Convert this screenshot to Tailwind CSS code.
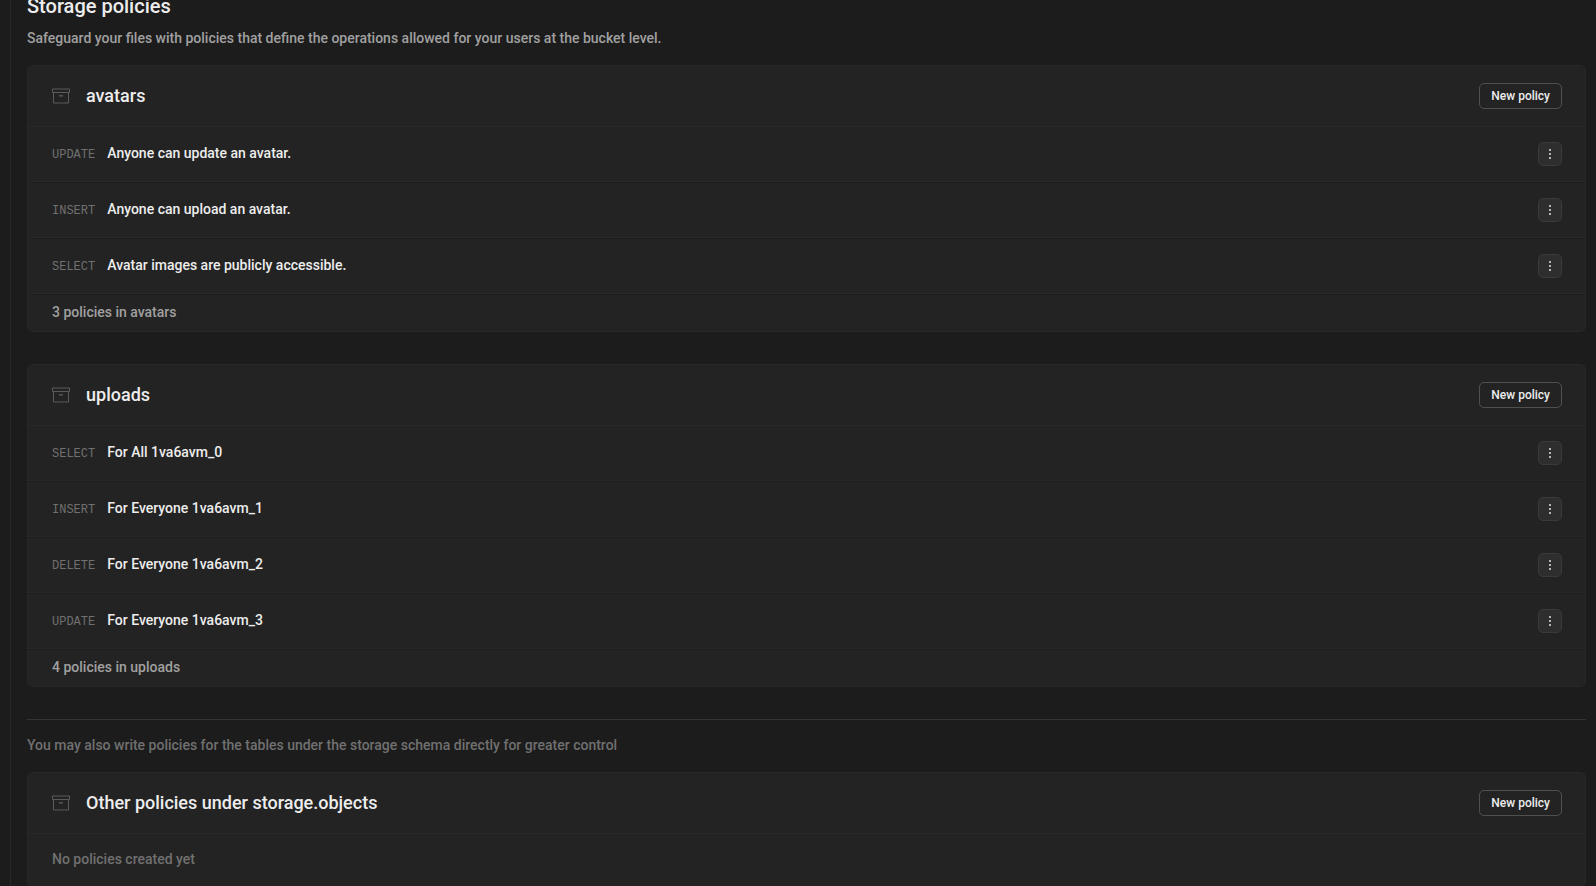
<!DOCTYPE html>
<html lang="en">
  <head>
    <meta charset="UTF-8" />
    <meta name="viewport" content="width=device-width, initial-scale=1.0" />
    <script src="https://cdn.jsdelivr.net/npm/@tailwindcss/browser@4"></script>
    <title>Storage policies</title>
  </head>
  <body class="bg-[#1c1c1c] font-['Roboto',sans-serif] text-sm font-medium text-[#ededed]">
    <!-- Icons -->
    <svg class="hidden" aria-hidden="true">
      <symbol id="archive" viewBox="0 0 18 16" fill="none" stroke="currentColor">
        <path d="M.5 1h17v3.5H.5zM1.5 4.5V15h15V4.5" />
        <path d="M7 7.8h4" stroke-width="1.4" />
      </symbol>
      <symbol id="dots" viewBox="0 0 2 10" fill="currentColor">
        <path d="M0 0h2v2H0zM0 4h2v2H0zM0 8h2v2H0z" />
      </symbol>
    </svg>

    <div class="flex h-screen overflow-hidden">
      <!-- Edge of the side menu -->
      <aside class="w-[11px] shrink-0 border-r border-[#282828]"></aside>

      <main class="-mt-2 min-w-0 grow pl-4 pr-[10px]">
        <h1 class="text-xl/7">Storage policies</h1>
        <p class="mt-2 text-[#a0a0a0]">
          Safeguard your files with policies that define the operations allowed for your users at the bucket level.
        </p>

        <!-- avatars -->
        <section class="mt-[17px] rounded-md border border-[#282828] bg-[#232323]">
          <header class="flex h-[61px] items-center justify-between border-b border-[#282828] pr-[23px] pl-6">
            <div class="flex items-center gap-4">
              <svg class="h-4 w-[18px] text-[#5a5a5a]"><use href="#archive" /></svg>
              <h2 class="text-lg/7">avatars</h2>
            </div>
            <button class="h-[26px] rounded-[5px] border border-[#505050] px-[11px] text-xs">New policy</button>
          </header>
          <ul>
            <li class="flex items-center justify-between border-b border-[#282828] py-[15px] pr-[23px] pl-6">
              <div class="flex items-baseline gap-3 pb-0.5">
                <span class="font-['Liberation_Mono',monospace] text-xs font-normal text-[#707070]">UPDATE</span>
                <span>Anyone can update an avatar.</span>
              </div>
              <button aria-label="Policy options" class="flex size-6 items-center justify-center rounded-[5px] border border-[#3a3a3a] bg-[#2e2e2e] text-[#b4b4b4]">
                <svg class="h-[10px] w-0.5"><use href="#dots" /></svg>
              </button>
            </li>
            <li class="flex items-center justify-between border-t border-b border-t-[#1c1c1c] border-b-[#282828] py-[15px] pr-[23px] pl-6">
              <div class="flex items-baseline gap-3 pb-0.5">
                <span class="font-['Liberation_Mono',monospace] text-xs font-normal text-[#707070]">INSERT</span>
                <span>Anyone can upload an avatar.</span>
              </div>
              <button aria-label="Policy options" class="flex size-6 items-center justify-center rounded-[5px] border border-[#3a3a3a] bg-[#2e2e2e] text-[#b4b4b4]">
                <svg class="h-[10px] w-0.5"><use href="#dots" /></svg>
              </button>
            </li>
            <li class="flex items-center justify-between border-t border-b border-t-[#1c1c1c] border-b-[#282828] py-[15px] pr-[23px] pl-6">
              <div class="flex items-baseline gap-3 pb-0.5">
                <span class="font-['Liberation_Mono',monospace] text-xs font-normal text-[#707070]">SELECT</span>
                <span>Avatar images are publicly accessible.</span>
              </div>
              <button aria-label="Policy options" class="flex size-6 items-center justify-center rounded-[5px] border border-[#3a3a3a] bg-[#2e2e2e] text-[#b4b4b4]">
                <svg class="h-[10px] w-0.5"><use href="#dots" /></svg>
              </button>
            </li>
          </ul>
          <footer class="border-t border-[#1c1c1c] px-6 pt-[7px] pb-[9px] text-[#a0a0a0]">3 policies in avatars</footer>
        </section>

        <!-- uploads -->
        <section class="mt-8 rounded-md border border-[#282828] bg-[#232323]">
          <header class="flex h-[61px] items-center justify-between border-b border-[#282828] pr-[23px] pl-6">
            <div class="flex items-center gap-4">
              <svg class="h-4 w-[18px] text-[#5a5a5a]"><use href="#archive" /></svg>
              <h2 class="text-lg/7">uploads</h2>
            </div>
            <button class="h-[26px] rounded-[5px] border border-[#505050] px-[11px] text-xs">New policy</button>
          </header>
          <ul>
            <li class="flex items-center justify-between border-b border-[#282828] py-[15px] pr-[23px] pl-6">
              <div class="flex items-baseline gap-3 pb-0.5">
                <span class="font-['Liberation_Mono',monospace] text-xs font-normal text-[#707070]">SELECT</span>
                <span>For All 1va6avm_0</span>
              </div>
              <button aria-label="Policy options" class="flex size-6 items-center justify-center rounded-[5px] border border-[#3a3a3a] bg-[#2e2e2e] text-[#b4b4b4]">
                <svg class="h-[10px] w-0.5"><use href="#dots" /></svg>
              </button>
            </li>
            <li class="flex items-center justify-between border-t border-b border-t-[#1c1c1c] border-b-[#282828] py-[15px] pr-[23px] pl-6">
              <div class="flex items-baseline gap-3 pb-0.5">
                <span class="font-['Liberation_Mono',monospace] text-xs font-normal text-[#707070]">INSERT</span>
                <span>For Everyone 1va6avm_1</span>
              </div>
              <button aria-label="Policy options" class="flex size-6 items-center justify-center rounded-[5px] border border-[#3a3a3a] bg-[#2e2e2e] text-[#b4b4b4]">
                <svg class="h-[10px] w-0.5"><use href="#dots" /></svg>
              </button>
            </li>
            <li class="flex items-center justify-between border-t border-b border-t-[#1c1c1c] border-b-[#282828] py-[15px] pr-[23px] pl-6">
              <div class="flex items-baseline gap-3 pb-0.5">
                <span class="font-['Liberation_Mono',monospace] text-xs font-normal text-[#707070]">DELETE</span>
                <span>For Everyone 1va6avm_2</span>
              </div>
              <button aria-label="Policy options" class="flex size-6 items-center justify-center rounded-[5px] border border-[#3a3a3a] bg-[#2e2e2e] text-[#b4b4b4]">
                <svg class="h-[10px] w-0.5"><use href="#dots" /></svg>
              </button>
            </li>
            <li class="flex items-center justify-between border-t border-b border-t-[#1c1c1c] border-b-[#282828] py-[15px] pr-[23px] pl-6">
              <div class="flex items-baseline gap-3 pb-0.5">
                <span class="font-['Liberation_Mono',monospace] text-xs font-normal text-[#707070]">UPDATE</span>
                <span>For Everyone 1va6avm_3</span>
              </div>
              <button aria-label="Policy options" class="flex size-6 items-center justify-center rounded-[5px] border border-[#3a3a3a] bg-[#2e2e2e] text-[#b4b4b4]">
                <svg class="h-[10px] w-0.5"><use href="#dots" /></svg>
              </button>
            </li>
          </ul>
          <footer class="border-t border-[#1c1c1c] px-6 pt-[7px] pb-[9px] text-[#a0a0a0]">4 policies in uploads</footer>
        </section>

        <hr class="mt-8 border-[#343434]" />
        <p class="mt-[15px] mb-[17px] text-[#707070]">
          You may also write policies for the tables under the storage schema directly for greater control
        </p>

        <!-- storage.objects -->
        <section class="rounded-md border border-[#282828] bg-[#232323]">
          <header class="flex h-[61px] items-center justify-between border-b border-[#282828] pr-[23px] pl-6">
            <div class="flex items-center gap-4">
              <svg class="h-4 w-[18px] text-[#5a5a5a]"><use href="#archive" /></svg>
              <h2 class="text-lg/7">Other policies under storage.objects</h2>
            </div>
            <button class="h-[26px] rounded-[5px] border border-[#505050] px-[11px] text-xs">New policy</button>
          </header>
          <p class="px-6 pt-[15px] pb-[17px] text-[#707070]">No policies created yet</p>
        </section>
      </main>
    </div>
  </body>
</html>
